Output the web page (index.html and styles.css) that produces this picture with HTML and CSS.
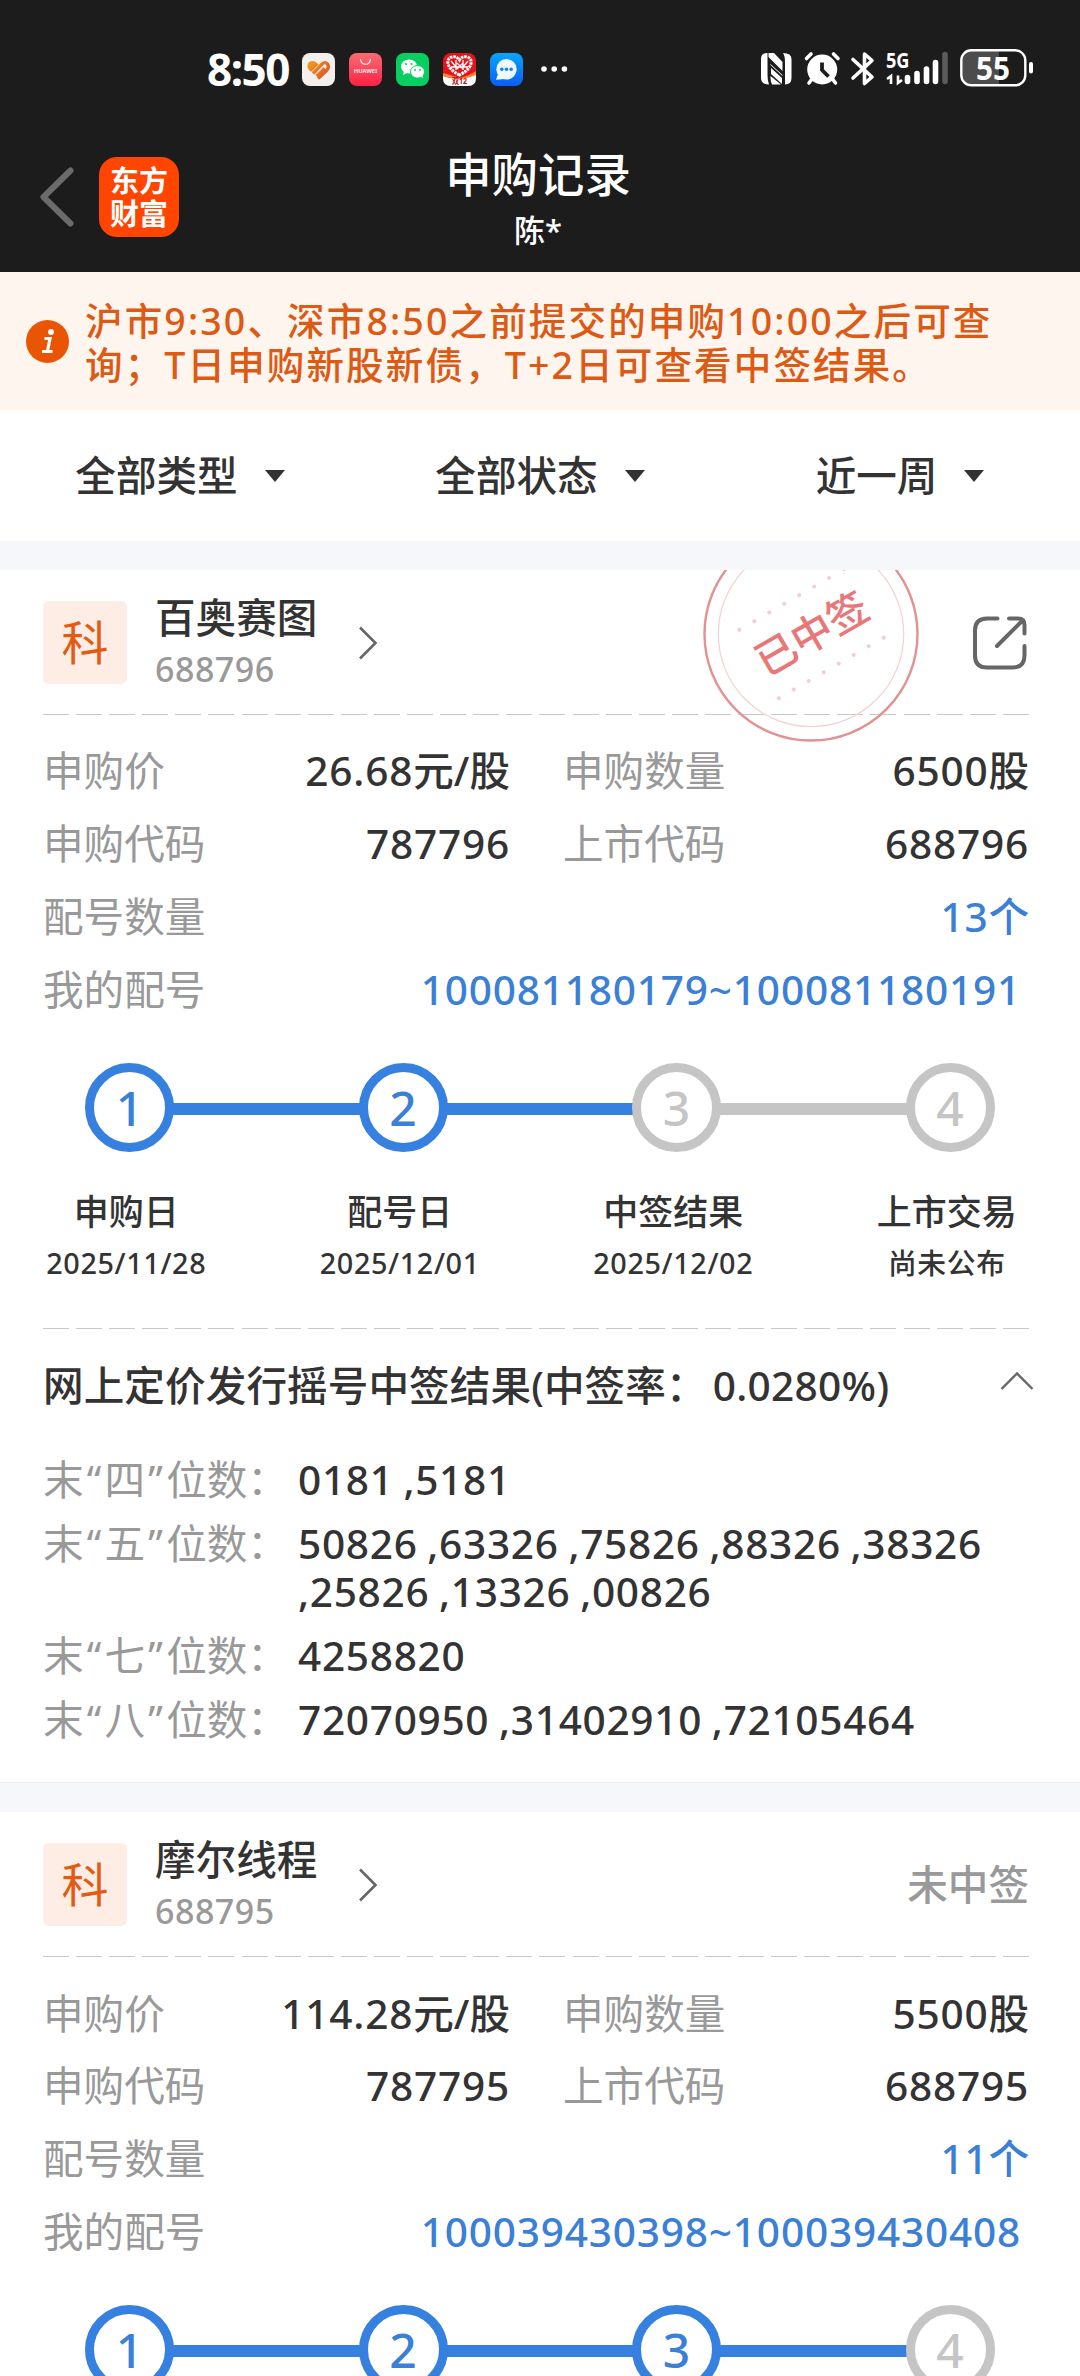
FILE: index.html
```html
<!DOCTYPE html>
<html lang="zh-CN">
<head>
    <meta charset="UTF-8">
    <meta name="viewport" content="width=device-width, initial-scale=1.0">
    <title>申购记录</title>
    <link rel="stylesheet" href="styles.css">
</head>
<body>
    <header class="header">
        <div class="status-bar">
            <div class="status-left">
                <span class="clock">8:50</span>
                <svg class="app" viewBox="0 0 33 33">
                    <defs><linearGradient id="heart" gradientUnits="userSpaceOnUse" x1="5" y1="8" x2="26" y2="26"><stop offset="0" stop-color="#f5a11c"/><stop offset="1" stop-color="#d9502a"/></linearGradient></defs>
                    <rect width="33" height="33" rx="8" fill="#f3efec"/>
                    <path d="M8 18C3 13 6 8 10.500 8Q13 8 15 10L18.500 13.500L12 20Z" fill="url(#heart)"/>
                    <path d="M11 20.500L19.500 11.500Q23 8 25.500 11Q27.500 14 25 17L16 25.500M14.500 23L22.500 15" fill="none" stroke="url(#heart)" stroke-width="3.400"/>
                    <path d="M9.500 19L17 11.500M14 21.500L22 13.500" stroke="#f3efec" stroke-width=".8"/>
                </svg>
                <svg class="app" viewBox="0 0 33 33">
                    <defs><linearGradient id="shop" x1="0" y1="0" x2="0" y2="1"><stop offset="0" stop-color="#fb6b74"/><stop offset="1" stop-color="#fb2244"/></linearGradient></defs>
                    <rect width="33" height="33" rx="8" fill="url(#shop)"/>
                    <path d="M11.500 6C12 13 21 13 21.500 6" fill="none" stroke="#fff" stroke-width="1.100"/>
                    <text x="4.800" y="20.200" class="huawei" textLength="23.500" lengthAdjust="spacingAndGlyphs">HUAWEI</text>
                </svg>
                <svg class="app" viewBox="0 0 33 33">
                    <rect width="33" height="33" rx="8" fill="#09cf62"/>
                    <ellipse cx="13" cy="13.500" rx="8" ry="7" fill="#fff"/>
                    <path d="M8 18l-1 4 4-2z" fill="#fff"/>
                    <ellipse cx="21.500" cy="18.800" rx="7" ry="6.300" fill="#fff" stroke="#09cf62" stroke-width="1"/>
                    <path d="M24 23l3 2-.5-4z" fill="#fff"/>
                    <g fill="#09cf62"><circle cx="10" cy="11" r="1.100"/><circle cx="15.500" cy="11" r="1.100"/><circle cx="19" cy="17" r="1"/><circle cx="24" cy="17" r="1"/></g>
                </svg>
                <svg class="app" viewBox="0 0 33 33">
                    <rect width="33" height="33" rx="8" fill="#e5141b"/>
                    <path d="M0 23Q16 29 33 21V25Q33 33 25 33H8Q0 33 0 25Z" fill="#fff"/>
                    <path d="M0 20Q14 24 17 25Q26 23 33 18V22Q24 26 16 26Q8 26 0 23Z" fill="#f4893c"/>
                    <path d="M16.500 22C2 15 3 5 9 4Q14 3 16.500 7Q19 3 24 4C30 5 31 15 16.500 22Z" fill="none" stroke="#fff" stroke-width="3" stroke-dasharray="2.500 .8"/>
                    <path d="M8 8l5 6M25 8l-5 6M13 7v10M20 7v10M8 14h17M14 10l6 6M20 10l-6 6" stroke="#fff" stroke-width="1.300"/>
                    <text x="9" y="31" class="twelve" textLength="15" lengthAdjust="spacingAndGlyphs">双12</text>
                </svg>
                <svg class="app" viewBox="0 0 33 33">
                    <defs><linearGradient id="msg" x1="0" y1="0" x2="0" y2="1"><stop offset="0" stop-color="#08a6fb"/><stop offset="1" stop-color="#0b5df5"/></linearGradient></defs>
                    <rect width="33" height="33" rx="8" fill="url(#msg)"/>
                    <circle cx="16.500" cy="16.300" r="10.200" fill="#eef8ff"/>
                    <path d="M8 21L6 26.800L15 26Z" fill="#eef8ff"/>
                    <g fill="#0b80f8"><circle cx="11.800" cy="16.300" r="1.700"/><circle cx="16.500" cy="16.300" r="1.700"/><circle cx="21.200" cy="16.300" r="1.700"/></g>
                </svg>
                <svg class="more" width="28" height="8" viewBox="0 0 28 8" fill="#fff"><circle cx="4" cy="4" r="2.800"/><circle cx="14.200" cy="4" r="2.800"/><circle cx="24.400" cy="4" r="2.800"/></svg>
            </div>
            <svg class="status-right" width="274" height="40" viewBox="0 0 274 40">
                <!-- nfc -->
                <path d="M7 4Q1 4 1 10V29Q1 35.500 9 35.500Q7.500 32 7.500 26V4Z" fill="#fff"/>
                <path d="M25 35.500Q31.500 35.500 31.500 29V10Q31.500 4 23 4Q25 7 25 13Z" fill="#fff"/>
                <path d="M8.500 4H14L22.500 13V27L10.500 16V27L21 35.500H25V35.500H12Q10.500 33 10.500 28V15L22.500 26V22L8.500 8Z" fill="#fff"/>
                <path d="M11 19L22 29V35L11 25Z" fill="#fff"/>
                <!-- alarm -->
                <circle cx="62.200" cy="20.500" r="15" fill="#fff"/>
                <path d="M62 13.500V21L68.500 27.500" fill="none" stroke="#1c1c1c" stroke-width="3.800"/>
                <g stroke="#fff" stroke-width="3.600" stroke-linecap="round"><path d="M46.500 9.500L51 5M78 9.500L73.500 5M52 30L49 34M72.500 30L75.500 34"/></g>
                <!-- bluetooth -->
                <path d="M93 10.500L112 28L104.500 34.500V5L112 11.500L93 29" fill="none" stroke="#fff" stroke-width="3.600" stroke-linejoin="round" stroke-linecap="round"/>
                <!-- signal -->
                <text x="126" y="18.800" class="net" textLength="23.500" lengthAdjust="spacingAndGlyphs">5G</text>
                <path d="M127 30L131 27V35M138 26.500V34L142 31" fill="none" stroke="#fff" stroke-width="2.600"/>
                <g stroke="#fff" stroke-width="5.600" stroke-linecap="round"><path d="M147.500 28.500V32.500M157 24.500V32.500M166.500 20V32.500M175.500 13.500V32.500"/><path d="M185 5.500V32.500" stroke="#5a5a5a"/></g>
                <!-- battery -->
                <path d="M211 2H239V36H211Q202 36 202 27V11Q202 2 211 2Z" fill="#4c4c4c"/>
                <rect x="201.300" y="1.300" width="64" height="35" rx="10" fill="none" stroke="#fff" stroke-width="2.400"/>
                <rect x="269" y="13" width="4" height="11.500" rx="2" fill="#fff"/>
                <text x="216" y="30.500" class="level" textLength="34" lengthAdjust="spacingAndGlyphs">55</text>
            </svg>
        </div>
        <div class="nav">
            <div class="nav-side">
                <svg width="36" height="62" viewBox="0 0 36 62"><path d="M30.500 4.500L3.500 31L30.500 57.500" fill="none" stroke="#6b6b6b" stroke-width="6" stroke-linecap="round" stroke-linejoin="round"/></svg>
                <div class="logo">东方<br>财富</div>
            </div>
            <div class="nav-title">
                <h1>申购记录</h1>
                <p>陈*</p>
            </div>
        </div>
    </header>

    <div class="notice">
        <svg width="43" height="43" viewBox="0 0 43 43">
            <circle cx="21.500" cy="21.500" r="21.500" fill="#ea5504"/>
            <circle cx="25" cy="12" r="2.900" fill="#fff"/>
            <path d="M18.500 18.500H24L21.500 31M16 31.500H26.500" fill="none" stroke="#fff" stroke-width="3.200"/>
        </svg>
        <p>沪市9:30、深市8:50之前提交的申购10:00之后可查<br>询；T日申购新股新债，T+2日可查看中签结果。</p>
    </div>

    <div class="filters">
        <div class="filter">全部类型<i class="caret"></i></div>
        <div class="filter">全部状态<i class="caret"></i></div>
        <div class="filter">近一周<i class="caret"></i></div>
    </div>

    <section class="card">
        <svg class="stamp" width="220" height="175" viewBox="-110 -64 220 175">
            <circle r="106.500" fill="none" stroke="#e39191" stroke-width="2.400"/>
            <circle r="92.700" fill="none" stroke="#f3d3d3" stroke-width="1.300"/>
            <g transform="rotate(-30)">
                <text class="stamp-text" x="1" y="15" text-anchor="middle">已中签</text>
                <path class="stamp-dots" d="M-60 -39.500H62M-60 39.500H62"/>
            </g>
        </svg>
        <div class="card-head">
            <span class="badge">科</span>
            <div class="stock">
                <b>百奥赛图</b>
                <span>688796</span>
            </div>
            <svg class="go" width="20" height="34" viewBox="0 0 20 34"><path d="M2 1.500L17.500 17L2 32.500" fill="none" stroke="#666" stroke-width="2.600"/></svg>
            <svg class="share" width="54" height="54" viewBox="0 0 54 54"><path d="M24.500 2.500H14Q2 2.500 2 14.500V39.500Q2 51.500 14 51.500H39.500Q51.500 51.500 51.500 39.500V30M36 2.500H45Q51.500 2.500 51.500 9V17.500M50 4L24 30" fill="none" stroke="#666" stroke-width="4" stroke-linecap="round"/></svg>
        </div>
        <div class="dash"></div>
        <div class="info">
            <div class="row">
                <div class="cell"><label>申购价</label><span><em>26.68</em>元/股</span></div>
                <div class="cell"><label>申购数量</label><span><em>6500</em>股</span></div>
            </div>
            <div class="row">
                <div class="cell"><label>申购代码</label><span><em>787796</em></span></div>
                <div class="cell"><label>上市代码</label><span><em>688796</em></span></div>
            </div>
            <div class="row blue"><label>配号数量</label><span><em>13</em>个</span></div>
            <div class="row blue numbers"><label>我的配号</label><span><em>100081180179~100081180191</em></span></div>
        </div>
        <div class="steps">
            <span class="dot on">1</span><i class="line on"></i>
            <span class="dot on">2</span><i class="line on"></i>
            <span class="dot">3</span><i class="line"></i>
            <span class="dot">4</span>
        </div>
        <div class="step-labels">
            <div><b>申购日</b><span>2025/11/28</span></div>
            <div><b>配号日</b><span>2025/12/01</span></div>
            <div><b>中签结果</b><span>2025/12/02</span></div>
            <div><b>上市交易</b><span>尚未公布</span></div>
        </div>
        <div class="dash"></div>
        <div class="result-title">
            <span>网上定价发行摇号中签结果(中签率：<em>0.0280%</em>)</span>
            <svg width="34" height="20" viewBox="0 0 34 20"><path d="M1.500 18L17 2.500L32.500 18" fill="none" stroke="#666" stroke-width="2.400"/></svg>
        </div>
        <div class="result-list">
            <label>末<q>“</q>四<q>”</q>位数：</label><span>0181 ,5181</span>
            <label>末<q>“</q>五<q>”</q>位数：</label><span>50826 ,63326 ,75826 ,88326 ,38326<br>,25826 ,13326 ,00826</span>
            <label>末<q>“</q>七<q>”</q>位数：</label><span>4258820</span>
            <label>末<q>“</q>八<q>”</q>位数：</label><span>72070950 ,31402910 ,72105464</span>
        </div>
    </section>

    <section class="card">
        <div class="card-head">
            <span class="badge">科</span>
            <div class="stock">
                <b>摩尔线程</b>
                <span>688795</span>
            </div>
            <svg class="go" width="20" height="34" viewBox="0 0 20 34"><path d="M2 1.500L17.500 17L2 32.500" fill="none" stroke="#666" stroke-width="2.600"/></svg>
            <span class="state">未中签</span>
        </div>
        <div class="dash"></div>
        <div class="info">
            <div class="row">
                <div class="cell"><label>申购价</label><span><em>114.28</em>元/股</span></div>
                <div class="cell"><label>申购数量</label><span><em>5500</em>股</span></div>
            </div>
            <div class="row">
                <div class="cell"><label>申购代码</label><span><em>787795</em></span></div>
                <div class="cell"><label>上市代码</label><span><em>688795</em></span></div>
            </div>
            <div class="row blue"><label>配号数量</label><span><em>11</em>个</span></div>
            <div class="row blue numbers"><label>我的配号</label><span><em>100039430398~100039430408</em></span></div>
        </div>
        <div class="steps">
            <span class="dot on">1</span><i class="line on"></i>
            <span class="dot on">2</span><i class="line on"></i>
            <span class="dot on">3</span><i class="line on"></i>
            <span class="dot">4</span>
        </div>
    </section>
</body>
</html>
```
FILE: styles.css
```css
* {
    box-sizing: border-box;
    margin: 0;
    padding: 0;
}
body {
    width: 1080px;
    height: 2376px;
    overflow: hidden;
    background-color: #f6f7fa;
    color: #333;
    font-family: "Noto Sans", "Noto Sans CJK SC", sans-serif;
    font-size: 40.6px;
    font-weight: 500;
    line-height: 48px;
    white-space: nowrap;
}
svg {
    display: block;
    flex: none;
    overflow: visible;
}
em {
    font-style: normal;
    letter-spacing: 0.8px;
}
b {
    font-weight: 500;
}

/* header */
.header {
    height: 272px;
    background-color: #1c1c1c;
    color: #fff;
}
.status-bar {
    display: flex;
    justify-content: space-between;
    height: 138px;
    padding: 0 46px 0 207px;
    align-items: center;
}
.status-left {
    display: flex;
    align-items: center;
    gap: 14px;
}
.clock {
    width: 81px;
    font-size: 44px;
    font-weight: 700;
    letter-spacing: -1.5px;
}
.app {
    width: 33px;
    height: 33px;
}
.more {
    margin-left: 3px;
}
.huawei {
    font: 600 5.5px "Noto Sans", sans-serif;
    fill: #fff;
}
.twelve {
    font: 700 8px "Noto Sans", "Noto Sans CJK SC", sans-serif;
    fill: #b8141b;
}
.net {
    font: 700 22px "Noto Sans", sans-serif;
    fill: #fff;
}
.level {
    font: 700 32px "Noto Sans", sans-serif;
    fill: #fff;
}
.nav {
    display: grid;
    grid-template-columns: 400px 276px 400px;
    padding-top: 8px;
}
.nav-side {
    display: flex;
    align-items: center;
    gap: 23px;
    height: 80px;
    margin-top: 11px;
    padding-left: 40px;
}
.logo {
    width: 80px;
    height: 80px;
    padding-top: 7px;
    border-radius: 18px;
    background-color: #ff4500;
    font-size: 29px;
    font-weight: 700;
    line-height: 33px;
    text-align: center;
}
.nav-title {
    text-align: center;
}
.nav-title h1 {
    font-size: 46.4px;
    font-weight: 500;
    line-height: 56px;
}
.nav-title p {
    margin-top: 8px;
    font-size: 31px;
    line-height: 40px;
}

/* notice */
.notice {
    display: flex;
    align-items: center;
    gap: 16px;
    height: 138px;
    padding-left: 26px;
    background-color: #fff5ef;
    color: #dc5a14;
}
.notice p {
    padding-top: 4px;
    font-size: 37.5px;
    letter-spacing: 2.15px;
    line-height: 44.5px;
}

/* filters */
.filters {
    display: grid;
    grid-template-columns: repeat(3, 1fr);
    height: 131px;
    background-color: #fff;
}
.filter {
    display: flex;
    align-items: center;
    justify-content: center;
    gap: 27px;
}
.caret {
    border: 10px solid transparent;
    border-top: 12px solid #333;
    border-bottom: 0;
}

/* cards */
.card {
    position: relative;
    margin-top: 29px;
    padding: 31px 51px 39px 43px;
    border-bottom: 1px solid #ececec;
    background-color: #fff;
}
.stamp {
    position: absolute;
    top: 0;
    right: 159px;
    overflow: hidden;
}
.stamp-text {
    font-size: 41px;
    font-weight: 500;
    fill: #e87777;
}
.stamp-dots {
    fill: none;
    stroke: #f2cfcf;
    stroke-width: 4px;
    stroke-linecap: round;
    stroke-dasharray: 0 17.3;
}
.card-head {
    display: flex;
    align-items: center;
    height: 83px;
}
.badge {
    width: 84px;
    height: 83px;
    border-radius: 6px;
    background-color: #fdede4;
    color: #e35a12;
    font-size: 47px;
    font-weight: 400;
    line-height: 82px;
    text-align: center;
}
.stock {
    display: flex;
    flex-direction: column;
    width: 162px;
    margin-left: 28px;
}
.stock b {
    line-height: 52px;
}
.stock span {
    color: #999;
    font-size: 34px;
    letter-spacing: 0.5px;
    line-height: 50px;
}
.go {
    margin-left: 41px;
}
.share,
.state {
    margin-left: auto;
    color: #999;
}
.share {
    margin-right: 2px;
}
.dash {
    width: 986px;
    height: 1px;
    background: repeating-linear-gradient(90deg, #c8c8c8 0 26px, transparent 26px 33.1px);
}
.card-head + .dash {
    margin-top: 30px;
}

/* subscription details */
.info {
    padding-top: 20px;
}
.info label,
.result-list label {
    color: #999;
    font-weight: 400;
}
.row {
    display: flex;
    align-items: center;
    justify-content: space-between;
    height: 72.8px;
}
.cell {
    display: flex;
    justify-content: space-between;
    width: 467px;
}
.cell:last-child {
    width: 466px;
}
.blue span {
    color: #3b7fd6;
}
.numbers {
    padding-right: 8px;
}

/* progress */
.steps {
    display: flex;
    align-items: center;
    margin: 37px 0 0 42px;
}
.dot {
    width: 89px;
    height: 89px;
    border: 9px solid #c5c5c5;
    border-radius: 50%;
    color: #c5c5c5;
    font-size: 48px;
    line-height: 71px;
    text-align: center;
}
.dot.on {
    border-color: #3680e0;
    color: #3b7fd6;
}
.line {
    width: 188.5px;
    height: 12px;
    margin: 2px -2px 0;
    background-color: #c5c5c5;
}
.line.on {
    background-color: #3680e0;
}
.step-labels {
    display: grid;
    grid-template-columns: repeat(4, 273.5px);
    height: 176px;
    margin-left: -53.5px;
    padding-top: 36px;
    text-align: center;
}
.step-labels b,
.step-labels span {
    display: block;
    font-size: 35px;
}
.step-labels span {
    margin-top: 3px;
    font-size: 28.8px;
    letter-spacing: 0.6px;
}

/* lottery result */
.result-title {
    display: flex;
    justify-content: space-between;
    height: 93px;
    margin-right: -5px;
    padding-top: 33px;
    letter-spacing: 0.1px;
}
.result-title em {
    margin-left: 6px;
    letter-spacing: 0.3px;
}
.result-title svg {
    margin-top: 9px;
}
.result-list {
    display: grid;
    grid-template-columns: 255px 1fr;
    row-gap: 16.5px;
    padding-top: 34px;
    line-height: 47.5px;
}
.result-list span {
    letter-spacing: 0.7px;
    word-spacing: -1.5px;
}
.result-list q {
    display: inline-block;
    width: 21px;
    text-align: center;
    quotes: none;
}
```
